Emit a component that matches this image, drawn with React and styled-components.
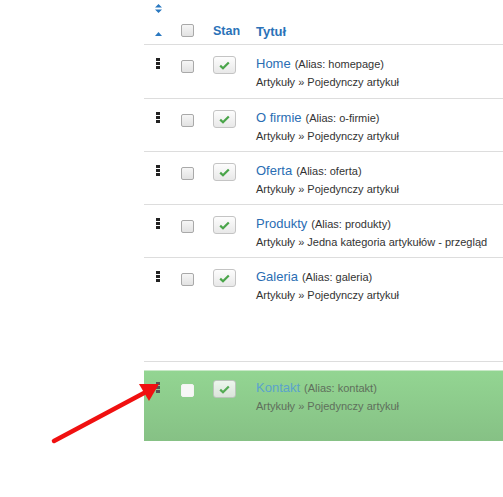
import React from 'react';
import styled, { createGlobalStyle } from 'styled-components';

const GlobalStyle = createGlobalStyle`
  html, body {
    margin: 0;
    padding: 0;
    background: #fff;
    font-family: "Liberation Sans", Arial, sans-serif;
  }
`;

const Page = styled.div`
  position: relative;
  width: 503px;
  height: 497px;
  overflow: hidden;
  padding-left: 144px;
  box-sizing: border-box;
`;

const Table = styled.div`
  width: 400px;
`;

const Grid = styled.div`
  display: grid;
  grid-template-columns: 28px 31px 44px 1fr;
  align-items: start;
`;

const HeaderRow = styled(Grid)`
  height: 44px;
  border-bottom: 1px solid #ddd;
`;

const SortCell = styled.div`
  display: flex;
  flex-direction: column;
  align-items: center;
  padding-top: 4px;
  gap: 19px;
  color: #2a78c0;
`;

const HeadCheck = styled.div`
  padding-top: 24px;
  display: flex;
  justify-content: center;
`;

const HeadLabel = styled.div`
  padding-top: 24px;
  font-size: ${(p) => p.$size || 12.5}px;
  font-weight: bold;
  color: #2a72b8;
  padding-left: ${(p) => p.$indent || 0}px;
`;

const Row = styled(Grid)`
  height: 53px;
  box-sizing: border-box;
  border-top: ${(p) => (p.$first ? 'none' : '1px solid #ddd')};
  padding-top: 10px;
`;

const Handle = styled.div`
  display: flex;
  justify-content: center;
  padding-top: 3px;
`;

const Dots = styled.div`
  display: flex;
  flex-direction: column;
  gap: 1px;
  span {
    display: block;
    width: 4px;
    height: 3px;
    background: ${(p) => p.$color || '#222'};
  }
`;

const CheckCell = styled.div`
  display: flex;
  justify-content: center;
  padding-top: 5px;
`;

const Box = styled.div`
  width: 11px;
  height: 11px;
  border: 1px solid ${(p) => (p.$ghost ? '#f4f4f4' : '#a9a9a9')};
  border-radius: 2px;
  background: ${(p) => (p.$ghost ? '#f7f7f7' : 'linear-gradient(#f6f6f6, #e2e2e2)')};
`;

const StatusCell = styled.div`
  padding-left: 10px;
  padding-top: 1px;
`;

const StatusBtn = styled.div`
  width: 23px;
  height: 18px;
  box-sizing: border-box;
  border: 1px solid #c4c4c4;
  border-radius: 3px;
  background: linear-gradient(#fdfdfd, #e8e8e8);
  display: flex;
  align-items: center;
  justify-content: center;
  opacity: ${(p) => (p.$ghost ? 0.85 : 1)};
`;

const TitleCell = styled.div`
  padding-left: 9px;
  line-height: 1;
`;

const TitleLine = styled.div`
  white-space: nowrap;
`;

const Link = styled.span`
  font-size: 13px;
  color: ${(p) => (p.$ghost ? '#5aa3cc' : '#2a6db3')};
`;

const Alias = styled.span`
  font-size: 11px;
  color: ${(p) => (p.$ghost ? '#5f6f5c' : '#333')};
  margin-left: 4px;
`;

const Sub = styled.div`
  font-size: 11px;
  color: ${(p) => (p.$ghost ? '#5f6f5c' : '#333')};
  margin-top: 6px;
  white-space: nowrap;
`;

const Placeholder = styled.div`
  height: 51px;
  border-bottom: 1px solid #ddd;
  margin-bottom: 8px;
`;

const GhostRow = styled(Grid)`
  height: 71px;
  box-sizing: border-box;
  padding-top: 8px;
  margin-right: -100px;
  background: linear-gradient(#93d592, #86c185);
  border-top: 1px solid #c9e9c8;
`;

const Arrow = styled.svg`
  position: absolute;
  left: 0;
  top: 0;
  pointer-events: none;
`;

const Check = () => (
  <svg width="11" height="9" viewBox="0 0 11 9">
    <path d="M1.2 4.6 L4 7.3 L9.8 1.4" fill="none" stroke="#4aa54a" strokeWidth="2.2" />
  </svg>
);

const Handle3 = ({ color }) => (
  <Handle>
    <Dots $color={color}>
      <span />
      <span />
      <span />
    </Dots>
  </Handle>
);

const items = [
  { title: 'Home', alias: 'homepage', type: 'Pojedynczy artykuł' },
  { title: 'O firmie', alias: 'o-firmie', type: 'Pojedynczy artykuł' },
  { title: 'Oferta', alias: 'oferta', type: 'Pojedynczy artykuł' },
  { title: 'Produkty', alias: 'produkty', type: 'Jedna kategoria artykułów - przegląd' },
  { title: 'Galeria', alias: 'galeria', type: 'Pojedynczy artykuł' },
];

const MenuRow = ({ item, first }) => (
  <Row $first={first}>
    <Handle3 />
    <CheckCell>
      <Box />
    </CheckCell>
    <StatusCell>
      <StatusBtn>
        <Check />
      </StatusBtn>
    </StatusCell>
    <TitleCell>
      <TitleLine>
        <Link>{item.title}</Link>
        <Alias>(Alias: {item.alias})</Alias>
      </TitleLine>
      <Sub>Artykuły » {item.type}</Sub>
    </TitleCell>
  </Row>
);

export default function App() {
  return (
    <Page>
      <GlobalStyle />
      <Table>
        <HeaderRow>
          <SortCell>
            <svg width="7" height="9" viewBox="0 0 7 9">
              <path d="M0 3.5 L3.5 0 L7 3.5 Z M0 5.5 L3.5 9 L7 5.5 Z" fill="currentColor" />
            </svg>
            <svg width="7" height="4" viewBox="0 0 7 4">
              <path d="M0 4 L3.5 0 L7 4 Z" fill="currentColor" />
            </svg>
          </SortCell>
          <HeadCheck>
            <Box />
          </HeadCheck>
          <HeadLabel $indent={10} $size={12.5}>Stan</HeadLabel>
          <HeadLabel $indent={9} $size={13}>Tytuł</HeadLabel>
        </HeaderRow>
        {items.map((item, i) => (
          <MenuRow key={item.title} item={item} first={i === 0} />
        ))}
        <Placeholder />
        <GhostRow>
          <Handle3 color="#555" />
          <CheckCell>
            <Box $ghost />
          </CheckCell>
          <StatusCell>
            <StatusBtn $ghost>
              <Check />
            </StatusBtn>
          </StatusCell>
          <TitleCell>
            <TitleLine>
              <Link $ghost>Kontakt</Link>
              <Alias $ghost>(Alias: kontakt)</Alias>
            </TitleLine>
            <Sub $ghost>Artykuły » Pojedynczy artykuł</Sub>
          </TitleCell>
        </GhostRow>
      </Table>
      <Arrow width="503" height="497" viewBox="0 0 503 497">
        <line x1="54" y1="441" x2="144" y2="393" stroke="#f01010" strokeWidth="4.5" strokeLinecap="round" />
        <path d="M159 384 L139 384 L149 401 Z" fill="#f01010" />
      </Arrow>
    </Page>
  );
}
